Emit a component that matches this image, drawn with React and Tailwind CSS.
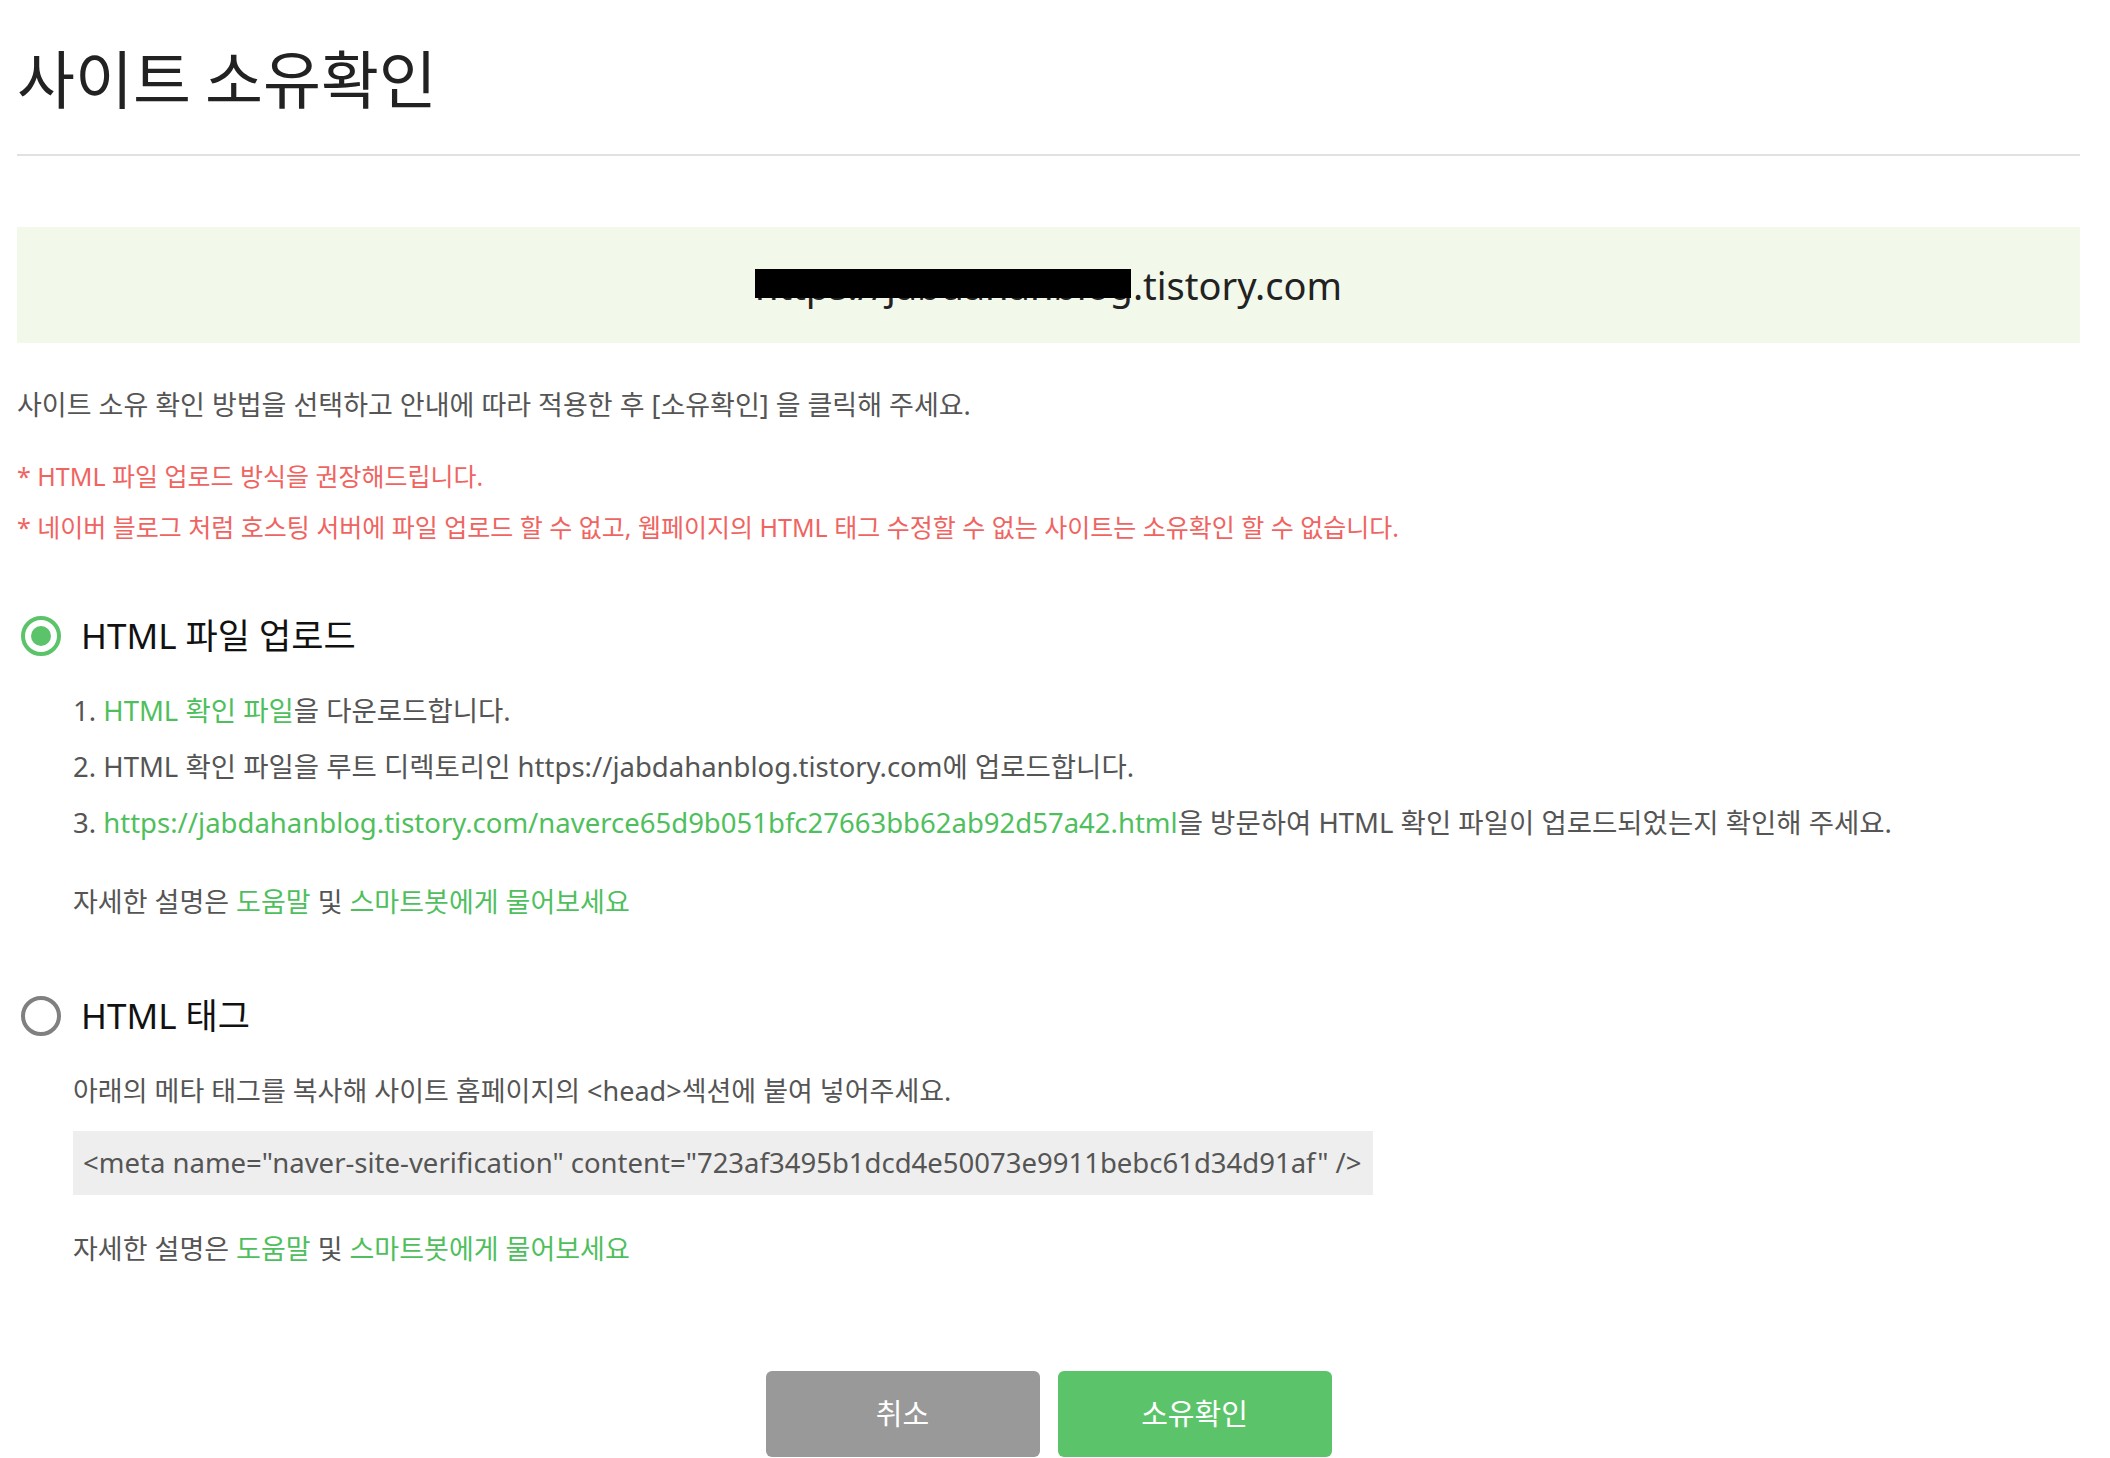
import React from 'react';

const GREEN = 'text-[#4fbf5d]';

const Radio = ({ checked }) =>
	checked ? (
		<span className="ml-[4px] flex h-10 w-10 items-center justify-center rounded-full border-4 border-[#5bc46a]">
			<span className="h-5 w-5 rounded-full bg-[#5bc46a]"></span>
		</span>
	) : (
		<span className="ml-[4px] h-10 w-10 rounded-full border-4 border-[#808080]"></span>
	);

const HelpLine = ({ className }) => (
	<p className={`text-[27px] leading-[36px] text-[#555] ${className}`}>
		자세한 설명은 <span className={GREEN}>도움말</span> 및 <span className={GREEN}>스마트봇에게 물어보세요</span>
	</p>
);

const App = () => {
	return (
		<div className="min-h-screen bg-white pl-[17px] pr-[30px] font-['Noto_Sans','Noto_Sans_CJK_KR',sans-serif]">
			{/* Title */}
			<h1 className="pt-[41px] text-[63px] leading-[70px] text-[#222] font-['Noto_Sans_CJK_KR',sans-serif]">
				사이트 소유확인
			</h1>
			<div className="mt-[43px] h-[2px] bg-[#e1e1e1]"></div>

			{/* Site url */}
			<div className="mt-[71px] flex h-[116px] items-center justify-center bg-[#f2f8ea]">
				<p className="text-[38px] leading-[46px] text-[#222]">
					<span className="relative">
						https://jabdahanblog
						<span className="absolute left-0 right-[2px] top-[10px] h-[29px] bg-black"></span>
					</span>
					.tistory.com
				</p>
			</div>

			{/* Notice */}
			<p className="mt-[44px] text-[27px] leading-[36px] text-[#555]">
				사이트 소유 확인 방법을 선택하고 안내에 따라 적용한 후 [소유확인] 을 클릭해 주세요.
			</p>
			<div className="mt-[28px] text-[25px] leading-[51px] text-[#ef6461]">
				<p>* HTML 파일 업로드 방식을 권장해드립니다.</p>
				<p>* 네이버 블로그 처럼 호스팅 서버에 파일 업로드 할 수 없고, 웹페이지의 HTML 태그 수정할 수 없는 사이트는 소유확인 할 수 없습니다.</p>
			</div>

			{/* HTML file upload */}
			<div className="mt-[63px] flex items-center gap-[20px]">
				<Radio checked />
				<span className="text-[35px] leading-[40px] text-[#111]">HTML 파일 업로드</span>
			</div>
			<ol className="mt-[27px] pl-[56px] text-[27.5px] leading-[56px] text-[#555]">
				<li>
					1. <span className={GREEN}>HTML 확인 파일</span>을 다운로드합니다.
				</li>
				<li>2. HTML 확인 파일을 루트 디렉토리인 https://jabdahanblog.tistory.com에 업로드합니다.</li>
				<li>
					3.{' '}
					<span className={GREEN}>https://jabdahanblog.tistory.com/naverce65d9b051bfc27663bb62ab92d57a42.html</span>을
					방문하여 HTML 확인 파일이 업로드되었는지 확인해 주세요.
				</li>
			</ol>
			<HelpLine className="mt-[33px] pl-[56px]" />

			{/* HTML tag */}
			<div className="mt-[76px] flex items-center gap-[20px]">
				<Radio />
				<span className="text-[35px] leading-[40px] text-[#111]">HTML 태그</span>
			</div>
			<div className="pl-[56px]">
				<p className="mt-[37px] text-[27px] leading-[36px] text-[#555]">
					아래의 메타 태그를 복사해 사이트 홈페이지의 &lt;head&gt;섹션에 붙여 넣어주세요.
				</p>
				<div className="mt-[22px] flex h-[64px] w-[1300px] items-center bg-[#eeeeee] px-[10px] text-[27.5px] text-[#555]">
					&lt;meta name="naver-site-verification" content="723af3495b1dcd4e50073e9911bebc61d34d91af" /&gt;
				</div>
			</div>
			<HelpLine className="mt-[36px] pl-[56px]" />

			{/* Buttons */}
			<div className="mt-[104px] flex justify-center gap-[18px]">
				<button className="h-[86px] w-[274px] rounded-md bg-[#999999] text-[29px] text-white">취소</button>
				<button className="h-[86px] w-[274px] rounded-md bg-[#5bc46a] text-[29px] text-white">소유확인</button>
			</div>
		</div>
	);
};

export default App;
